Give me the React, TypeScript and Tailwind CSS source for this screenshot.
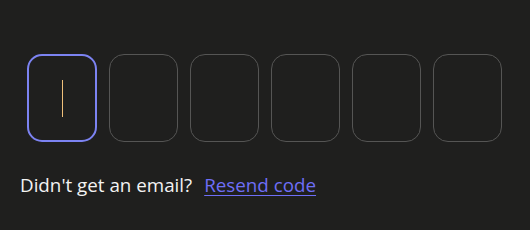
export default function App() {
  const boxes = [0, 1, 2, 3, 4, 5];
  return (
    <div className="w-[530px] h-[230px] bg-[#1f1f1e] overflow-hidden" style={{ fontFamily: '"Open Sans", "Noto Sans", sans-serif' }}>
      <div className="flex gap-3 pl-[27px] pt-[54px]">
        {boxes.map((i) => (
          <div
            key={i}
            className={
              i === 0
                ? "w-[70px] h-[88px] rounded-[15px] border-2 border-[#7c83f2] flex items-center justify-center"
                : "w-[69px] h-[88px] rounded-[15px] border border-[#555554]"
            }
          >
            {i === 0 && <div className="w-[1px] h-[37px] bg-[#f0c07a]" />}
          </div>
        ))}
      </div>
      <div className="flex items-baseline pl-[20px] pt-[29px] text-[18.8px] leading-[28px]">
        <span className="text-[#f3f3f3]">Didn't get an email?</span>
        <a href="#" className="ml-[12px] text-[#6e6ef6] underline underline-offset-[3px]">Resend code</a>
      </div>
    </div>
  );
}
